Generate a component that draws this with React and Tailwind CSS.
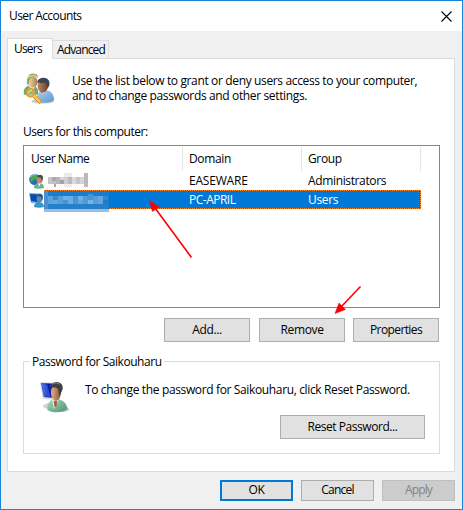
import { clsx } from "clsx"

const AdminsIcon = () => (
  <svg width="32" height="32" viewBox="0 0 34 34" className="shrink-0">
    <defs>
      <linearGradient id="skinLight" x1="0" x2="1">
        <stop offset="0" stopColor="#f4dcb8" />
        <stop offset="1" stopColor="#a87950" />
      </linearGradient>
      <linearGradient id="skinDark" x1="0" x2="1">
        <stop offset="0" stopColor="#b98762" />
        <stop offset="1" stopColor="#704427" />
      </linearGradient>
      <linearGradient id="shirtBlue" x1="0" y1="0" x2="1" y2="1">
        <stop offset="0" stopColor="#b4d5f5" />
        <stop offset="1" stopColor="#5e93cc" />
      </linearGradient>
    </defs>
    <ellipse cx="21" cy="30" rx="12" ry="2.500" fill="#c9c9c9" />
    <path d="M1 22c-1-5 2-8 7-9 5 0 8 3 8 6v4H5c-2 0-3 1-4-1z" fill="#68a77b" />
    <path d="M6 14l4 5 4-6z" fill="#e6efe4" />
    <ellipse cx="10.500" cy="9.500" rx="5" ry="6" fill="url(#skinLight)" />
    <path d="M4 12C4 4 6 1 10 .5c4 0 6 1 6 4-5-1-8 0-9 3l-1 5z" fill="#9fa563" />
    <path d="M5 5c3-3 8-3 11 0" fill="none" stroke="#d8d6a1" strokeWidth="1.500" />
    <path d="M14 29c0-7 3-11 9-11 6 0 10 4 10 11-4 3-14 4-19 0z" fill="url(#shirtBlue)" />
    <path d="M18 18l4 4 4-4z" fill="#e8f3fd" />
    <ellipse cx="21" cy="13.500" rx="5.500" ry="7.500" fill="url(#skinDark)" />
    <path d="M15 10c1-4 4-5 7-5 4 0 7 3 6 8l-2 4-1-6c-3-1-6 0-8-1z" fill="#3e4652" />
    <circle cx="8" cy="21" r="4" fill="#b9c98a" fillOpacity=".55" stroke="#e1a32d" strokeWidth="2.400" />
    <path d="M5.500 21.500c1-2 2-3 4-3" stroke="#fff2bd" strokeWidth="1" fill="none" />
    <path d="M11.500 24.500l7.500 7" stroke="#c78a1d" strokeWidth="3.800" />
    <path d="M11.500 24l7 7" stroke="#ffcd55" strokeWidth="2.200" />
  </svg>
)

const PasswordIcon = () => (
  <svg width="32" height="32" viewBox="0 0 34 34" className="shrink-0">
    <defs>
      <linearGradient id="monitor" x1="0" x2="1">
        <stop offset="0" stopColor="#3d6ff0" />
        <stop offset=".45" stopColor="#0515a8" />
        <stop offset="1" stopColor="#2853d8" />
      </linearGradient>
      <linearGradient id="face" x1="0" x2="1">
        <stop offset="0" stopColor="#dfb38b" />
        <stop offset="1" stopColor="#875333" />
      </linearGradient>
      <linearGradient id="shirtGreen" x1="0" y1="0" x2="1" y2="1">
        <stop offset="0" stopColor="#a9dec3" />
        <stop offset="1" stopColor="#48936f" />
      </linearGradient>
    </defs>
    <path d="M4 26l6-3 5 2-3 5-6-1z" fill="#d2d2d2" />
    <ellipse cx="25" cy="30" rx="7" ry="3" fill="#cbcbcb" />
    <path d="M1 1l19 1-2 18-14-1z" fill="#d9dce0" />
    <path d="M2 2l17 1-2 15-12-1z" fill="url(#monitor)" />
    <path d="M3 3l6 1 3 13-7-1z" fill="#6d94ff" fillOpacity=".4" />
    <path d="M9 31c-1-7 3-12 9-12 7 0 12 5 12 11-5 4-16 4-21 1z" fill="url(#shirtGreen)" />
    <path d="M14 20l2 10 5-10z" fill="#f1f5f2" />
    <path d="M15.500 21h4l-1 6-2 1z" fill="#a36338" />
    <ellipse cx="18" cy="12.500" rx="5.200" ry="8.500" fill="url(#face)" />
    <path d="M11 6c2-4 5-5 9-5 4 1 6 4 5 8l-3 7-2-8c-3-2-6 0-9-2z" fill="#3b3f40" />
    <path d="M14 3.500c2-2 6-2 8 0" stroke="#7d8382" strokeWidth="1.300" fill="none" />
  </svg>
)

const GlobeUserIcon = () => (
  <svg width="16" height="16" viewBox="0 0 16 16" className="shrink-0">
    <circle cx="6" cy="6.500" r="5.800" fill="#2c68b5" />
    <path d="M2 3l4-2 3 2-2 3-3 1-1 3-2-3z" fill="#47ab52" />
    <path d="M1.500 4c2-3 5-3 7-2" stroke="#aed8ef" strokeWidth="1" fill="none" />
    <path d="M5 15c0-3 2-5 5-5 4 0 5 3 5 5-3 1-7 1-10 0z" fill="#62b390" />
    <path d="M9 10l1 4 2-4z" fill="#eef6f1" />
    <ellipse cx="10.500" cy="6.500" rx="3" ry="4" fill="#bd8c68" />
    <path d="M8 4c1-3 6-3 6 1l-1 4-1-4z" fill="#454a4b" />
  </svg>
)

const LocalUserIcon = () => (
  <svg width="16" height="16" viewBox="0 0 16 16" className="shrink-0">
    <path d="M0 1l11 .5-1 10L2 11z" fill="#7cacd9" />
    <path d="M1 2l9 .5-1 7.500-7-1z" fill="#064bb3" />
    <path d="M5 15c0-3 2-5 5-5 4 0 5 3 5 5-3 1-7 1-10 0z" fill="#3996c8" />
    <ellipse cx="10.500" cy="6.500" rx="3" ry="4" fill="#5b8ab2" />
    <path d="M8 4c1-3 6-3 6 1l-1 4-1-4z" fill="#20598f" />
  </svg>
)

// [x, y, width, height, colour]
const GRAY_BLOCKS = [
  [0, 4, 4, 7, "#c7c5c5"],
  [4, 4, 4, 4, "#aba7aa"],
  [4, 8, 4, 3, "#c3bfc2"],
  [8, 4, 4, 7, "#b9b5b9"],
  [12, 4, 4, 3, "#d8d6d8"],
  [12, 7, 4, 4, "#a6a2a4"],
  [16, 0, 8, 4, "#e9eaec"],
  [16, 4, 4, 7, "#d2cccf"],
  [20, 4, 4, 7, "#c1b8bd"],
  [24, 4, 4, 7, "#d9d9dc"],
  [28, 4, 4, 7, "#c8c5ca"],
  [32, 4, 4, 7, "#d7d4d7"],
  [36, 0, 4, 14, "#bdb8bd"],
  [6, 11, 2, 3, "#aaa7ab"],
  [16, 11, 8, 3, "#eeecee"],
]

const BLUE_BLOCKS = [
  [0, 0, 65, 18, "#187ccf"],
  [0, 0, 4, 18, "#4b91cf"],
  [4, 5, 5, 8, "#5ba2dc"],
  [9, 5, 5, 4, "#2e8bd7"],
  [9, 9, 5, 4, "#60a6dd"],
  [14, 5, 5, 8, "#589fd9"],
  [19, 5, 5, 4, "#70b0e2"],
  [19, 9, 5, 4, "#4396d9"],
  [24, 5, 5, 8, "#6cabe0"],
  [29, 5, 5, 8, "#4396d9"],
  [34, 5, 5, 4, "#73afe0"],
  [34, 9, 5, 4, "#60a6dd"],
  [39, 5, 5, 8, "#4d9cda"],
  [44, 3, 5, 6, "#4795d6"],
  [44, 9, 5, 4, "#77b2e2"],
  [49, 5, 5, 8, "#559fda"],
  [54, 5, 5, 8, "#65a7dd"],
  [59, 5, 5, 4, "#3189d0"],
  [4, 13, 60, 5, "#2580cb"],
  [0, 18, 65, 3, "#9ebcdc"],
]

const Blocks = ({ blocks, width, height, className }) => (
  <svg width={width} height={height} shapeRendering="crispEdges" className={className}>
    {blocks.map(([x, y, w, h, fill], i) => (
      <rect key={i} x={x} y={y} width={w} height={h} fill={fill} />
    ))}
  </svg>
)

const Button = ({ children, className, ...props }) => (
  <button
    type="button"
    className={clsx("flex items-center justify-center border pb-px leading-none", className)}
    {...props}
  >
    {children}
  </button>
)

const Arrows = () => (
  <svg width="463" height="510" className="pointer-events-none absolute -left-px -top-px">
    <g stroke="#ff0000" strokeWidth="1.600" fill="#ff0000">
      <path d="M191.500 257.500L155 208" />
      <path d="M149.500 200.500l9.500 6.500-6.500 4.500z" strokeWidth=".5" />
      <path d="M360.500 286.500L341 307" />
      <path d="M335 313.500l4-10.500 6.500 6.500z" strokeWidth=".5" />
    </g>
  </svg>
)

const App = () => {
  return (
    <div className="relative flex h-[510px] w-[463px] flex-col border border-[#1883d7] bg-[#f0f0f0] font-['Open_Sans',sans-serif] text-[12px] tracking-[-0.36px] text-black">
      <header className="flex h-[30px] shrink-0 items-center justify-between bg-white pl-2 pr-[10px]">
        <h1 className="tracking-[-0.6px]">User Accounts</h1>
        <svg width="11" height="11" viewBox="0 0 11 11">
          <path d="M.5 .5l10 10M10.500 .5l-10 10" stroke="#000" strokeWidth="1.100" />
        </svg>
      </header>

      <div className="mt-[7px] flex h-5 shrink-0 items-end pl-[6px]">
        <div className="relative z-10 -mb-px flex h-[21px] w-[46px] items-center border border-b-0 border-[#dcdcdc] bg-white pl-[6px] tracking-[-0.8px]">
          Users
        </div>
        <div className="flex h-[18px] w-[56px] items-center border border-b-0 border-l-0 border-[#dcdcdc] pl-1 tracking-[-0.85px]">
          Advanced
        </div>
      </div>

      <main className="ml-[6px] flex h-[414px] w-[448px] shrink-0 flex-col border border-[#dcdcdc] bg-white px-[15px]">
        <div className="mt-[14px] flex h-[34px] gap-[17px]">
          <AdminsIcon />
          <p className="whitespace-nowrap leading-[15px]">
            Use the list below to grant or deny users access to your computer,
            <br />
            and to change passwords and other settings.
          </p>
        </div>

        <p className="mt-[17px] h-[15px] leading-[15px] tracking-[-0.45px]">Users for this computer:</p>

        <div className="mt-[6px] h-[163px] w-[417px] shrink-0 border border-[#828790] pt-px">
          <div className="flex h-[24px] items-center">
            <div className="flex h-full w-[159px] items-center border-r border-[#e5e5e5] pl-[7px] tracking-[-0.5px]">
              User Name
            </div>
            <div className="flex h-full w-[119px] items-center border-r border-[#e5e5e5] pl-[6px]">Domain</div>
            <div className="flex h-full w-[119px] items-center border-r border-[#e5e5e5] pl-[6px]">Group</div>
          </div>
          <div className="flex h-[19px] items-center">
            <div className="flex w-[159px] items-center gap-[3px] pl-[5px]">
              <GlobeUserIcon />
              <Blocks blocks={GRAY_BLOCKS} width={40} height={15} />
            </div>
            <div className="w-[119px] pl-[6px] tracking-[-0.2px]">EASEWARE</div>
            <div className="w-[119px] pl-[6px]">Administrators</div>
          </div>
          <div className="flex h-[19px] items-center">
            <div className="flex w-[20px] shrink-0 pl-[5px]">
              <LocalUserIcon />
            </div>
            <div className="relative flex h-full w-[377px] items-center border border-dotted border-[#ff8728] bg-[#0078d7] text-white">
              <Blocks blocks={BLUE_BLOCKS} width={65} height={21} className="absolute -left-px top-0" />
              <div className="w-[263px] shrink-0 pl-[144px] tracking-[-0.5px]">PC-APRIL</div>
              <div>Users</div>
            </div>
          </div>
        </div>

        <div className="mt-[10px] flex shrink-0 justify-end gap-2">
          <Button className="mr-px h-6 w-[86px] border-[#adadad] bg-[#e1e1e1]">Add...</Button>
          <Button className="h-6 w-[86px] border-[#adadad] bg-[#e1e1e1]">Remove</Button>
          <Button className="h-6 w-[86px] border-[#adadad] bg-[#e1e1e1] tracking-[-0.6px]">Properties</Button>
        </div>

        <section className="mt-[19px] flex h-[93px] w-[417px] shrink-0 flex-col border border-[#dcdcdc]">
          <h2 className="-mt-[8px] ml-[6px] h-[15px] w-[134px] whitespace-nowrap bg-white pl-[2px] leading-[15px] tracking-[-0.45px]">
            Password for Saikouharu
          </h2>
          <div className="mt-[12px] flex h-[36px] gap-[14px] pl-[15px]">
            <PasswordIcon />
            <p className="mt-[1px] whitespace-nowrap leading-[15px]">
              To change the password for Saikouharu, click Reset Password.
            </p>
          </div>
          <Button className="-mt-[2px] mr-[14px] h-6 w-[145px] self-end border-[#adadad] bg-[#e1e1e1] tracking-[-0.45px]">
            Reset Password...
          </Button>
        </section>
      </main>

      <footer className="mt-[8px] flex shrink-0 justify-end gap-2 pr-[7px]">
        <Button className="h-[21px] w-[73px] border-2 border-[#0078d7] bg-[#e1e1e1]">OK</Button>
        <Button className="h-[21px] w-[73px] border-[#adadad] bg-[#e1e1e1] tracking-[-0.8px]">Cancel</Button>
        <Button disabled className="h-[21px] w-[73px] border-[#bfbfbf] bg-[#cccccc] tracking-[-0.9px] text-[#838383]">
          Apply
        </Button>
      </footer>

      <Arrows />
    </div>
  )
}

export default App
